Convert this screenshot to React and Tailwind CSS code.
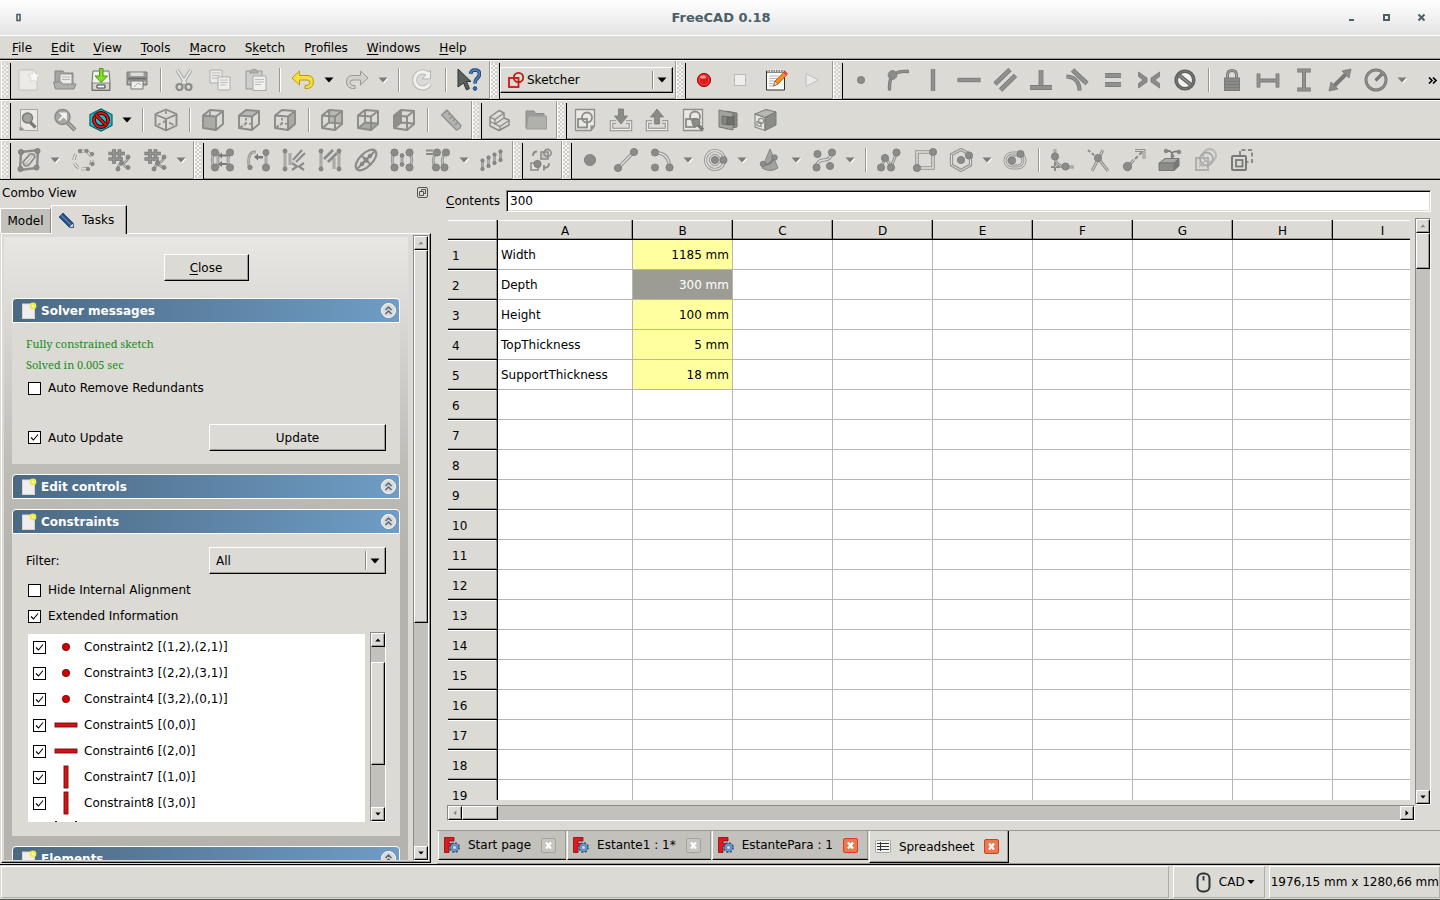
import React, { useState } from 'react';

const raised = 'border border-t-white border-l-white border-r-black border-b-black bg-[#dcdad5] shadow-[inset_-1px_-1px_0_#9b9990]';

const F = '#8b8b87';
const S = '#797975';
const BG = '#dcdad5';

/* ---------- drawing helpers ---------- */

const Node = ({ x, y, r = 3.6 }) => (
  <circle cx={x} cy={y} r={r} fill={F} stroke={S} strokeWidth="0.8" />
);

const Pipe = ({ d, w = 3.6 }) => (
  <>
    <path d={d} fill="none" stroke="#94948f" strokeWidth={w} />
    <path d={d} fill="none" stroke="#e2e1dd" strokeWidth={w - 2.2} />
  </>
);

const Bar = ({ d, w = 3.6 }) => (
  <>
    <path d={d} fill="none" stroke={S} strokeWidth={w} />
    <path d={d} fill="none" stroke="#91918d" strokeWidth={w - 1.6} />
  </>
);

const CubeEdges = () => (
  <path d="M2 7.500L15 8.500L15 22L2 20ZM2 7.500L9 2L22 3L15 8.500M22 3V16L15 22" fill="none" stroke={F} strokeWidth="1.9" strokeLinejoin="round" />
);

const CubeDashes = () => (
  <path d="M9 10V12.500M9 14V15.500L7 17M12 15.500L14 16M5.500 17.500L3.500 19.500" fill="none" stroke={F} strokeWidth="1.8" />
);

const CubeInside = () => (
  <path d="M9 3V14.500L3 19.500M9 14.500L21 15.500" fill="none" stroke={F} strokeWidth="1.8" />
);

const Hash = () => (
  <Bar d="M7 1V16M12.500 1V13M1.500 5.500H18M1.500 11H16" w={3.6} />
);

const icons = {
  new: (
    <>
      <path d="M2 2H17L20 8V22H2Z" fill="#ecebe8" stroke="#c2c1bc" />
      <path d="M17 2L18.800 6L23 6.600L20 9.600L20.800 14L17 12L13.200 14L14 9.600L11 6.600L15.200 6Z" fill="#f7f7f5" stroke="#cfcec9" strokeWidth="0.7" />
    </>
  ),
  open: (
    <>
      <path d="M2 20V3H10L11.500 5H20V20Z" fill="#a3a39f" stroke="#858581" />
      <path d="M7 6H19V17H7Z" fill="#ecebe8" stroke="#93938f" />
      <path d="M9 9H17M9 11.500H17" stroke="#b5b5b0" />
      <path d="M0.500 14H8L10 16H23L21 21H2.500Z" fill="#b0b0ab" stroke="#898985" />
    </>
  ),
  save: (
    <>
      <path d="M4 3H20L21 14V22.500H3V14Z" fill="#f1f1ee" stroke="#6e706c" />
      <path d="M3.500 15H20.500V22H3.500Z" fill="#d5d6d2" stroke="#6e706c" strokeWidth="0.8" />
      <path d="M8 17H16V20H8Z" fill="#fff" stroke="#3b3d3b" />
      <path d="M10.500 0.500H14V8H18.500L12.200 14.500L6 8H10.500Z" fill="#7fdc28" stroke="#4a9a06" />
    </>
  ),
  print: (
    <>
      <path d="M2 4H22V17H2Z" fill="#9b9b97" stroke="#7b7b77" />
      <path d="M5.500 4.500H18.500V8H5.500Z" fill="#dddcd8" />
      <path d="M3 10.500H21" stroke="#6d6d69" strokeWidth="2" />
      <path d="M3 14.500H21" stroke="#cfcfca" />
      <path d="M6 13H18V21H6Z" fill="#efefec" stroke="#777773" />
      <path d="M9 19L13 15L16 17" stroke="#a9a9a5" fill="none" />
    </>
  ),
  cut: (
    <>
      <path d="M5 2L14 16M19 2L10 16" stroke="#9b9b97" strokeWidth="3.400" />
      <path d="M5 2L14 16M19 2L10 16" stroke="#f0f0ed" strokeWidth="1.600" />
      <circle cx="7.500" cy="19" r="3" fill="none" stroke="#8b8b87" strokeWidth="2.200" />
      <circle cx="16.500" cy="19" r="3" fill="none" stroke="#8b8b87" strokeWidth="2.200" />
    </>
  ),
  copy: (
    <>
      <path d="M2 2H14V15H2Z" fill="#ecebe8" stroke="#aeaea9" />
      <path d="M4 5H12M4 7.500H12M4 10H10" stroke="#bdbdb8" />
      <path d="M10 9H22V22H10Z" fill="#efefec" stroke="#aeaea9" />
      <path d="M12 12H20M12 14.500H20M12 17H18" stroke="#bdbdb8" />
    </>
  ),
  paste: (
    <>
      <path d="M2 3H18V21H2Z" fill="#cfcfca" stroke="#999995" />
      <path d="M6 5V3L10 1L14 3V5Z" fill="#b2b2ad" stroke="#999995" />
      <path d="M9 8H22V22.500H9Z" fill="#efefec" stroke="#aaaaa5" />
      <path d="M11 11.500H20M11 14H20M11 16.500H17" stroke="#bdbdb8" />
    </>
  ),
  undo: (
    <path d="M1 10L8.500 3V7.500H17Q22.500 8 22.500 14Q22 20 16.500 20.500H14V17.500H16Q19 17 19 14.500Q19 12 16 12H8.500V17Z" fill="#f6e040" stroke="#b99a08" strokeLinejoin="round" />
  ),
  redo: (
    <path d="M23 10L15.500 3V7.500H7Q1.500 8 1.500 14Q2 20 7.500 20.500H10V17.500H8Q5 17 5 14.500Q5 12 8 12H15.500V17Z" fill="#d2d1cc" stroke="#999994" strokeLinejoin="round" />
  ),
  refresh: (
    <>
      <path d="M18 6A8 8 0 1 0 19.500 16" fill="none" stroke="#b5b5b0" strokeWidth="5" />
      <path d="M20.500 2V11H12Z" fill="#f0f0ed" stroke="#b5b5b0" />
      <path d="M18 6A8 8 0 1 0 19.500 16" fill="none" stroke="#f0f0ed" strokeWidth="3.200" />
    </>
  ),
  whatsThis: (
    <>
      <path d="M1 1L14 13.500H9.500L12.500 20.500L9.500 22L6.500 15L1 19Z" fill="#5b605c" stroke="#2e3436" />
      <path d="M13.500 6Q14 2 18 2Q22.500 2.200 22.500 6Q22.500 8.500 19.500 11Q18 12.500 18 15.500" fill="none" stroke="#1c4678" strokeWidth="3.600" />
      <path d="M13.500 6Q14 2 18 2Q22.500 2.200 22.500 6Q22.500 8.500 19.500 11Q18 12.500 18 15.500" fill="none" stroke="#4f86c2" strokeWidth="1.600" />
      <circle cx="18" cy="20.500" r="1.800" fill="#3d72ae" stroke="#1c4678" />
    </>
  ),
  record: (
    <>
      <circle cx="12" cy="12" r="6.600" fill="#e01b1b" stroke="#9d0a0a" />
      <circle cx="12" cy="12" r="5" fill="none" stroke="#f04848" />
      <ellipse cx="11" cy="9" rx="3" ry="1.600" fill="#f99" />
    </>
  ),
  stop: <rect x="6.500" y="6.500" width="11" height="11" fill="#eeeeeb" stroke="#bab9b4" />,
  macro: (
    <>
      <path d="M2.500 3H20.500V22H2.500Z" fill="#fbfbfb" stroke="#2f2f2f" />
      <path d="M3 2H20V5H3Z" fill="#888a85" />
      <path d="M4 1V4M6.500 1V4M9 1V4M11.500 1V4M14 1V4M16.500 1V4M19 1V4" stroke="#eee" strokeWidth="0.900" />
      <path d="M5 8H15M5 10.500H14M5 13H11M5 15.500H9M5 18H9" stroke="#a5a5a5" strokeWidth="0.800" />
      <path d="M9.500 18L11 13L19.500 4.500L22.500 7.500L14 16Z" fill="#f58a1f" stroke="#a8520a" strokeWidth="0.700" />
      <path d="M19.500 4.500L21 3L24 5.500L22.500 7.500Z" fill="#e24a4a" />
      <path d="M9.500 18L11 13L14 16Z" fill="#f2d5a8" stroke="#60462a" strokeWidth="0.500" />
    </>
  ),
  play: <path d="M6 5.500L18.500 12L6 18.500Z" fill="#ebeae7" stroke="#bebdb8" />,
  point: <Node x={12} y={12} r={3.6} />,
  pointOnObject: (
    <>
      <path d="M4.500 21Q4 10 9 6.500Q14 2.800 22.500 3.500" fill="none" stroke={S} strokeWidth="3.400" strokeLinecap="round" />
      <path d="M4.500 21Q4 10 9 6.500Q14 2.800 22.500 3.500" fill="none" stroke="#91918d" strokeWidth="1.600" strokeLinecap="round" />
      <Node x={7.500} y={7} r={4.400} />
    </>
  ),
  vertical: <Bar d="M12 1V23" w={4.400} />,
  horizontal: <Bar d="M0.500 12H23.500" w={4.400} />,
  parallel: <Bar d="M2 16L17 1.500M7.500 22L22.500 7.500" w={4.600} />,
  perpendicular: (
    <>
      <Bar d="M12 2V18" w={4.800} />
      <Bar d="M1 19.500H23" w={5} />
    </>
  ),
  tangent: (
    <>
      <Bar d="M7.500 2L22 15.500" w={4.600} />
      <Bar d="M1.500 8.500Q9 9 12 13.500Q14.500 17 14.500 22.500" w={4} />
    </>
  ),
  equal: <Bar d="M4 7.500H20M4 16.500H20" w={5.200} />,
  symmetric: <path d="M1.500 4L10 10V14L1.500 20V15.500L6 12L1.500 8.500ZM22.500 4L14 10V14L22.500 20V15.500L18 12L22.500 8.500Z" fill={F} stroke={S} strokeWidth="0.800" />,
  block: (
    <>
      <circle cx="12" cy="12" r="8.800" fill="#f2f2ef" stroke="#5f5f5c" strokeWidth="3.600" />
      <circle cx="12" cy="12" r="8.800" fill="none" stroke="#7c7c78" strokeWidth="1" />
      <path d="M6.500 7.500L17.500 16.500" stroke="#5f5f5c" strokeWidth="4" />
      <path d="M6.500 7.500L17.500 16.500" stroke="#9a9a96" strokeWidth="1.400" />
    </>
  ),
  lock: (
    <>
      <path d="M7.500 10V7Q7.500 2.500 12 2.500Q16.500 2.500 16.500 7V10" fill="none" stroke={S} strokeWidth="3" />
      <path d="M7.500 10V7Q7.500 2.500 12 2.500Q16.500 2.500 16.500 7V10" fill="none" stroke="#a5a5a1" />
      <rect x="4.500" y="10" width="15" height="12.500" fill={F} stroke={S} />
      <path d="M5 13.500H19M5 16.500H19M5 19.500H19" stroke={S} strokeWidth="0.900" />
    </>
  ),
  distX: <Bar d="M2.500 5.500V19.500M21.500 5.500V19.500M3 12.500H21" w={3.800} />,
  distY: <Bar d="M5 2.500H19M5 21.500H19M12 3V21" w={4} />,
  distance: (
    <>
      <path d="M5 19L19 5" stroke={S} strokeWidth="4" />
      <path d="M23 1L21 10L14 3ZM1 23L3 14L10 21Z" fill={F} stroke={S} strokeWidth="0.800" />
    </>
  ),
  radius: (
    <>
      <circle cx="12" cy="12" r="10" fill="none" stroke={S} strokeWidth="3" />
      <circle cx="12" cy="12" r="10" fill="none" stroke="#9a9a96" strokeWidth="0.900" />
      <path d="M11.500 12.500L18 6" stroke={S} strokeWidth="3.200" />
    </>
  ),
  fitAll: (
    <>
      <path d="M3.500 1.500H20.500V22.500H8L3.500 18Z" fill="#eae9e5" stroke="#a5a5a1" />
      <path d="M2.500 18.500L7.500 22.500H2.500Z" fill={F} />
      <path d="M13 14L18.500 19.500" stroke={S} strokeWidth="3.200" />
      <circle cx="10.500" cy="10" r="5" fill="#a2a29e" stroke={S} strokeWidth="1.400" />
    </>
  ),
  fitSelection: (
    <>
      <path d="M14 14L22 22" stroke={S} strokeWidth="4" />
      <path d="M14 14L22 22" stroke="#b0b0ab" strokeWidth="2" />
      <circle cx="9.500" cy="9" r="7.500" fill="#a8a8a3" stroke={F} strokeWidth="1.600" />
      <path d="M6 12.500L11.500 7M8 5.500H13V10.500Z" fill="#f2f2ef" stroke="#f2f2ef" strokeWidth="1.800" />
    </>
  ),
  drawStyle: (
    <>
      <path d="M12 1L23 6.500V17.500L12 23L1 17.500V6.500Z" fill="#12c2cc" stroke="#0a5c63" strokeWidth="1.200" />
      <circle cx="12" cy="12" r="7" fill="none" stroke="#280000" strokeWidth="3.800" />
      <circle cx="12" cy="12" r="7" fill="none" stroke="#e01414" strokeWidth="2.200" />
      <path d="M7 7L17 17" stroke="#280000" strokeWidth="3.800" />
      <path d="M7 7L17 17" stroke="#e01414" strokeWidth="2.200" />
    </>
  ),
  iso: (
    <>
      <path d="M12 1.500L22.500 6V17.500L12 22.500L1.500 17.500V6ZM1.500 6.500L12 11L22.500 6.500M12 11V22" fill="none" stroke={F} strokeWidth="1.900" strokeLinejoin="round" />
      <path d="M12 3V6M12 12.500L9 14.500M6.500 15.500L4 17M15 14.500L19.500 17" fill="none" stroke={F} strokeWidth="1.600" />
    </>
  ),
  front: (
    <>
      <path d="M2 7.500L15 8.500V22L2 20Z" fill="#ababa6" />
      <path d="M9 3.500V7" stroke={F} strokeWidth="1.600" />
      <CubeEdges />
    </>
  ),
  top: (
    <>
      <path d="M2 7.500L9 2L22 3L15 8.500Z" fill="#b9b9b4" />
      <CubeEdges />
      <CubeDashes />
    </>
  ),
  right: (
    <>
      <path d="M15 8.500L22 3V16L15 22Z" fill="#ababa6" />
      <CubeEdges />
      <CubeDashes />
    </>
  ),
  rear: (
    <>
      <path d="M9 3L21 4V15.500L9 14.500Z" fill="#b9b9b4" />
      <CubeInside />
      <CubeEdges />
    </>
  ),
  bottom: (
    <>
      <path d="M3 19.500L9 14.500L21 15.500L15 21.500Z" fill="#ababa6" />
      <CubeInside />
      <CubeEdges />
    </>
  ),
  left: (
    <>
      <path d="M2 7.500L9 3V14.500L2 20Z" fill="#8f8f8b" />
      <CubeInside />
      <CubeEdges />
    </>
  ),
  ruler: (
    <>
      <path d="M2.500 7L8 2L22 17.500Q21.500 21 17.500 22Z" fill="#b5b5b0" stroke={F} strokeWidth="1.200" />
      <path d="M8 2L5.500 5M11 5L9 7M13.500 8L10.500 11M16 11L14 13M19 14L16 17" stroke={F} strokeWidth="1.200" />
    </>
  ),
  part: (
    <>
      <path d="M2 9L11 2.500L16 5V10L21 12V17L11 22.500L2 18Z" fill="#dddcd8" stroke={F} strokeWidth="1.500" strokeLinejoin="round" />
      <path d="M2 9L7 11.500L16 5M7 11.500V16L16 10M7 16L12 18.500L21 12.500M12 18.500V22M2 13.500L7 16" fill="none" stroke={F} strokeWidth="1.300" />
    </>
  ),
  folder: (
    <>
      <path d="M2 20V3H10L11.500 5.500H20V20Z" fill="#9c9c98" stroke="#8c8c88" />
      <path d="M4 8H22.500V21H2.500Z" fill="#b1b1ac" stroke="#9b9b97" />
    </>
  ),
  sketchNew: (
    <>
      <path d="M2.500 1.500H21.500V18L18 22.500H2.500Z" fill="#e9e8e4" stroke="#8f8f8b" strokeWidth="1.300" />
      <path d="M21.500 17.500H17.500V22.500Z" fill={F} />
      <rect x="5" y="11" width="9" height="8.500" fill="none" stroke={F} strokeWidth="1.800" />
      <circle cx="14" cy="9.500" r="5" fill="none" stroke={F} strokeWidth="1.800" />
    </>
  ),
  sketchEdit: (
    <>
      <path d="M7 14H2.500V21.500H21.500V14H17" fill="none" stroke={F} strokeWidth="3.400" />
      <path d="M7 14H2.500V21.500H21.500V14H17" fill="none" stroke="#efeeeb" strokeWidth="1.400" />
      <path d="M9.500 1H14.500V8H18.500L12 16L5.500 8H9.500Z" fill={F} stroke={S} strokeWidth="0.800" />
    </>
  ),
  sketchLeave: (
    <>
      <path d="M7 14H2.500V21.500H21.500V14H17" fill="none" stroke={F} strokeWidth="3.400" />
      <path d="M7 14H2.500V21.500H21.500V14H17" fill="none" stroke="#efeeeb" strokeWidth="1.400" />
      <path d="M9.500 16H14.500V9H18.500L12 1L5.500 9H9.500Z" fill={F} stroke={S} strokeWidth="0.800" />
    </>
  ),
  sketchView: (
    <>
      <path d="M2.500 1.500H21.500V22.500H2.500Z" fill="#e9e8e4" stroke="#8f8f8b" strokeWidth="1.300" />
      <rect x="5" y="11" width="9" height="8" fill="none" stroke={F} strokeWidth="1.800" />
      <circle cx="14" cy="8.500" r="5" fill="none" stroke={F} strokeWidth="1.800" />
      <path d="M17 17L22 22" stroke={S} strokeWidth="3.200" />
      <circle cx="15" cy="14.500" r="4" fill={F} stroke={S} />
    </>
  ),
  sketchSection: (
    <>
      <path d="M9 3L20 5V19L9 21Z" fill="#858581" stroke={S} />
      <path d="M2 2L16 5V22L2 19Z" fill="#a2a29e" stroke={S} />
      <path d="M5 8L13 9V17L5 16Z" fill="#858581" stroke="#6b6b68" />
      <path d="M10 10L17 8V17L10 16Z" fill="#6f6f6c" stroke="#5f5f5c" strokeWidth="0.800" />
    </>
  ),
  mapSketch: (
    <>
      <path d="M2 6L12 9.500V22.500L2 19Z" fill="#e6e5e1" stroke={F} strokeWidth="1.200" />
      <path d="M2 6L13 1.500L23 4L12 9.500Z" fill="#b8b8b3" stroke={S} />
      <path d="M12 9.500L23 4V17L12 22.500Z" fill={F} stroke={S} />
      <path d="M4 13.500L8 14.500V18.500L4 17.500Z" fill="none" stroke={F} strokeWidth="1.200" />
      <circle cx="8" cy="13" r="2.600" fill="none" stroke={F} strokeWidth="1.200" />
    </>
  ),
  validate: (
    <>
      <path d="M4 4L21 2L20 20L3 22Z" fill="none" stroke={F} strokeWidth="2.400" />
      <path d="M6 14L13 6Q18 5 18 9L12 17Q7 20 6 14Z" fill="#c5c4bf" stroke={F} strokeWidth="1.600" />
      <path d="M8 14L14 8M11 15L16 9" stroke="#efefec" />
      <Node x={4} y={4} r={2.600} />
      <Node x={20.500} y={3} r={2.600} />
      <Node x={3.500} y={21} r={2.600} />
      <Node x={19.500} y={19.500} r={2.600} />
    </>
  ),
  closeShape: (
    <>
      <circle cx="12" cy="12" r="9" fill="none" stroke="#94948f" strokeWidth="3.200" strokeDasharray="6 3.400" />
      <circle cx="12" cy="12" r="9" fill="none" stroke="#eceae6" strokeWidth="1.400" strokeDasharray="6 3.400" />
      <Node x={9} y={3} r={1.700} />
      <Node x={15.500} y={3} r={1.700} />
      <Node x={21} y={6} r={1.700} />
      <Node x={21.500} y={16} r={1.700} />
      <Node x={17} y={21} r={1.700} />
    </>
  ),
  connect: (
    <>
      <Hash />
      <Pipe d="M21 9Q20 14 16 15Q11 16 11 21M16 15Q17 19 21 19.500" w={2.800} />
      <Node x={21} y={9} r={2} />
      <Node x={14.500} y={15} r={2} />
      <Node x={11} y={21} r={2} />
      <Node x={21} y={19.500} r={2} />
    </>
  ),
  selectConstraints: (
    <>
      <Hash />
      <Pipe d="M21 9Q20 14 14.500 15M14.500 15L11 21M14.500 15Q17 19 21 19.500" w={2.800} />
      <Node x={21} y={9} r={2} />
      <Node x={14.500} y={15} r={2} />
      <Node x={11} y={21} r={2} />
      <Node x={21} y={19.500} r={2} />
    </>
  ),
  selElements: (
    <>
      <Pipe d="M4 4Q0.500 12 4 20M20 4Q16 12 20 20M8 4V20" w={2.800} />
      <path d="M8 7.500L12 4.500V6.500H17V8.500H12V10.500ZM8 16L12 13V15H17V17H12V19Z" fill={S} />
      <Node x={5} y={4.500} />
      <Node x={5} y={19.500} />
      <Node x={20} y={4.500} />
      <Node x={20} y={19.500} />
    </>
  ),
  selRedundant: (
    <>
      <Pipe d="M10 4Q1 3 3 18M20 5V19" w={2.800} />
      <path d="M8 9L12 5.500V8H17V10.500H12V12.500Z" fill={S} />
      <Node x={4} y={19.500} r={2.200} />
      <Node x={20} y={4.500} r={3} />
      <Node x={20} y={19.500} />
    </>
  ),
  selConflict: (
    <>
      <Pipe d="M3 3V21M8 5V17" w={2.800} />
      <path d="M11 12L20 2M14 14L23 5" stroke={F} strokeWidth="2" />
      <path d="M10 15L15 18.500L10 22M22 15L17 18.500L22 22" fill="none" stroke={F} strokeWidth="2.200" />
      <Node x={3} y={3} r={2} />
      <Node x={3} y={21} r={2} />
    </>
  ),
  selInternal: (
    <>
      <Pipe d="M3 3V21M21 3V21M16 10V21" w={2.800} />
      <path d="M6 11L15 2M10 14L19 5" stroke={F} strokeWidth="2.800" />
      <Node x={3} y={3} r={2} />
      <Node x={3} y={21} r={2} />
      <Node x={21} y={3} r={2} />
      <Node x={21} y={21} r={2} />
    </>
  ),
  ellipseIn: (
    <>
      <ellipse cx="12" cy="12" rx="13" ry="6.500" transform="rotate(-45 12 12)" fill="none" stroke={F} strokeWidth="2.200" />
      <path d="M3.500 20.500L20.500 3.500M8 8L16 16" stroke={F} strokeWidth="2" />
      <Node x={12} y={12} r={2.200} />
      <Node x={8} y={16} r={1.800} />
      <Node x={16} y={8} r={1.800} />
    </>
  ),
  symmetry: (
    <>
      <Pipe d="M4.500 4Q0 12 4.500 20M19.500 4Q24 12 19.500 20M12 8V16" w={2.800} />
      <Node x={4.500} y={4.500} />
      <Node x={4.500} y={19.500} />
      <Node x={19.500} y={4.500} />
      <Node x={19.500} y={19.500} />
      <Node x={12} y={7.500} r={1.900} />
      <Node x={12} y={16.500} r={1.900} />
    </>
  ),
  clone: (
    <>
      <path d="M0 2.500H7M0 6H7" stroke={F} strokeWidth="2" />
      <Pipe d="M10 5Q5 12 9 19M19 5Q14 12 18 19" w={2.800} />
      <Node x={11} y={4.500} />
      <Node x={20} y={4.500} />
      <Node x={10} y={19.500} />
      <Node x={18.500} y={19.500} />
    </>
  ),
  array: (
    <>
      <Pipe d="M2.500 13V21M8.500 10V18M14.500 7V15M20.500 4V12" w={2.600} />
      {[2.5, 8.5, 14.5, 20.5].map((x, i) => (
        <g key={x}>
          <Node x={x} y={12.5 - i * 3} r={1.700} />
          <Node x={x} y={21 - i * 3} r={1.700} />
        </g>
      ))}
    </>
  ),
  virtualSpace: (
    <>
      <rect x="12" y="4" width="7" height="7" fill="#c9c8c3" stroke={F} strokeWidth="1.500" />
      <circle cx="18.500" cy="5" r="3.600" fill="none" stroke={F} strokeWidth="1.600" />
      <rect x="2" y="15" width="7" height="7" fill="#e6e5e1" stroke={F} strokeWidth="1.500" />
      <circle cx="8.500" cy="16" r="3.600" fill={F} stroke={S} />
      <path d="M4 8Q4 3.500 8 3.500M20 15Q20 20 15 20M15 17V22.500" fill="none" stroke={F} strokeWidth="1.800" />
    </>
  ),
  dot: <Node x={12} y={12} r={5.600} />,
  line: (
    <>
      <Pipe d="M4 20L20 4" />
      <Node x={4} y={20} />
      <Node x={20} y={4} />
    </>
  ),
  arc: (
    <>
      <Pipe d="M5 4.500Q19 5 19.500 19" />
      <Node x={5} y={4.500} />
      <Node x={5} y={19.500} />
      <Node x={19.500} y={19.500} />
    </>
  ),
  circle: (
    <>
      <circle cx="11" cy="12" r="9.500" fill="none" stroke="#94948f" strokeWidth="3.200" />
      <circle cx="11" cy="12" r="9.500" fill="none" stroke="#e2e1dd" strokeWidth="1.400" />
      <circle cx="11" cy="12" r="5.500" fill="none" stroke="#94948f" />
      <Node x={11} y={12} />
      <Node x={19.500} y={12} />
    </>
  ),
  conic: (
    <>
      <path d="M12 1L20 20Q12 25 4 20Z" fill="#a2a29e" stroke={S} strokeWidth="0.800" />
      <path d="M5 16Q12 19 16 9" fill="none" stroke={S} strokeWidth="1.800" />
      <Node x={5} y={16} r={2.800} />
      <Node x={16.500} y={9.500} r={2.800} />
    </>
  ),
  spline: (
    <>
      <Pipe d="M4 20Q5 12 12 12Q19 12 20 4" />
      <Node x={5.500} y={6} />
      <Node x={20} y={4.500} />
      <Node x={4.500} y={19.500} />
      <Node x={18} y={18} />
    </>
  ),
  polyline: (
    <>
      <Pipe d="M4 20L8.500 9L14 19L20 4" w={3} />
      <Node x={4} y={19.500} />
      <Node x={8} y={10} />
      <Node x={14} y={19.500} />
      <Node x={19.500} y={4.500} />
    </>
  ),
  rectangle: (
    <>
      <Pipe d="M4 4H20V20H4Z" />
      <Node x={20} y={4} />
      <Node x={4} y={20} />
    </>
  ),
  polygon: (
    <>
      <Pipe d="M12 1.500L21.500 6.500V17L12 22.500L2.500 17V6.500Z" w={3.200} />
      <Node x={12} y={12} />
      <Node x={20} y={7.500} />
    </>
  ),
  slot: (
    <>
      <rect x="2" y="5" width="20" height="15" rx="7.500" fill="none" stroke="#94948f" strokeWidth="3" />
      <rect x="2" y="5" width="20" height="15" rx="7.500" fill="none" stroke="#e2e1dd" strokeWidth="1.200" />
      <rect x="5" y="8" width="14" height="9" rx="4.500" fill="none" stroke={F} strokeWidth="1" />
      <Node x={9} y={12.500} />
      <Node x={17.500} y={6} />
    </>
  ),
  fillet: (
    <>
      <Pipe d="M5 1V9Q6 19 16 19H24" w={2.800} />
      <path d="M5 14V23M1 19H10" stroke={F} strokeWidth="2" strokeDasharray="4 1" />
      <Node x={5} y={8.500} />
      <Node x={15.500} y={18.500} />
    </>
  ),
  trim: (
    <>
      <Pipe d="M17 2L6 23M12 10L22 23" w={3} />
      <path d="M2 2L9 8" stroke={F} strokeWidth="2" strokeDasharray="3 2" />
      <Node x={12} y={10} />
    </>
  ),
  extend: (
    <>
      <Pipe d="M5 19L12 12" w={3} />
      <Pipe d="M13 2.500H22V11" w={3} />
      <path d="M13 11L21 3" stroke={F} strokeWidth="2" strokeDasharray="4 2" />
      <Node x={5.500} y={18.500} r={4.200} />
    </>
  ),
  external: (
    <>
      <path d="M1 15L7 10.500H21L16 15Z" fill="#a9a9a4" stroke={S} />
      <path d="M1 15H16V22.500H1Z" fill={F} stroke={S} />
      <path d="M16 15L21 10.500V18L16 22.500Z" fill="#777773" stroke={S} />
      <path d="M8 3Q14 2 14 7V11M14 5Q16 3 20 3.500" fill="none" stroke={S} strokeWidth="1.600" />
      <Node x={8} y={3} r={1.800} />
      <Node x={21} y={4} r={1.800} />
      <Node x={14.500} y={8} r={1.500} />
    </>
  ),
  carbonCopy: (
    <>
      <rect x="2" y="10" width="12" height="12" fill="none" stroke="#b0b0ab" strokeWidth="2" />
      <circle cx="15.500" cy="7.500" r="6.500" fill="none" stroke="#b5b5b0" strokeWidth="1.800" />
      <circle cx="12.500" cy="11" r="6.500" fill="none" stroke="#a9a9a5" strokeWidth="1.800" />
      <path d="M5 19L11 13M5 15L9 19" stroke="#b5b5b0" strokeWidth="1.200" />
    </>
  ),
  construction: (
    <>
      <rect x="2" y="8" width="14" height="14" rx="1" fill="none" stroke={S} strokeWidth="2" />
      <rect x="6" y="12" width="6.500" height="6.500" fill="none" stroke={S} strokeWidth="1.800" />
      <path d="M10 7V2H22V14H17" fill="none" stroke={F} strokeWidth="2" strokeDasharray="4 2.500" />
    </>
  ),
};

const Icon = ({ name }) => (
  <svg width="24" height="24" viewBox="0 0 24 24" className="shrink-0" aria-hidden="true">
    {icons[name]}
  </svg>
);

const Arrow = ({ dir = 'down', size = 10, color = '#000' }) => {
  const paths = {
    down: 'M0.500 2.500H9.500L5 7.500Z',
    up: 'M0.500 7.500H9.500L5 2.500Z',
    left: 'M7.500 0.500V9.500L2.500 5Z',
    right: 'M2.500 0.500V9.500L7.500 5Z',
  };
  return (
    <svg width={size} height={size} viewBox="0 0 10 10" className="shrink-0" aria-hidden="true">
      {color !== '#000' && <path d={paths[dir]} transform="translate(1 1)" fill="#fff" />}
      <path d={paths[dir]} fill={color} />
    </svg>
  );
};

/* ---------- menu and toolbars ---------- */

const menus = [
  ['', 'F', 'ile'],
  ['', 'E', 'dit'],
  ['', 'V', 'iew'],
  ['', 'T', 'ools'],
  ['', 'M', 'acro'],
  ['S', 'k', 'etch'],
  ['P', 'r', 'ofiles'],
  ['', 'W', 'indows'],
  ['', 'H', 'elp'],
];

// '|' is a separator, a trailing '+' adds a drop-down arrow
const row1a = ['new', 'open', 'save', 'print', '|', 'cut', 'copy', 'paste', '|', 'undo+', 'redo+', '|', 'refresh', '|', 'whatsThis'];
const row1b = ['record', 'stop', 'macro', 'play'];
const row1c = ['point', 'pointOnObject', 'vertical', 'horizontal', 'parallel', 'perpendicular', 'tangent', 'equal', 'symmetric', 'block', '|', 'lock', 'distX', 'distY', 'distance', 'radius+'];
const row2 = [
  ['fitAll', 'fitSelection', 'drawStyle+', '|', 'iso', '|', 'front', 'top', 'right', '|', 'rear', 'bottom', 'left', '|', 'ruler'],
  ['part', 'folder'],
  ['sketchNew', 'sketchEdit', 'sketchLeave', 'sketchView', 'sketchSection', 'mapSketch'],
];
const row3 = [
  ['validate+', 'closeShape', 'connect', 'selectConstraints+'],
  ['selElements', 'selRedundant', 'selConflict', 'selInternal', 'ellipseIn', 'symmetry', 'clone+', 'array'],
  ['virtualSpace'],
  ['dot', 'line', 'arc+', 'circle+', 'conic+', 'spline+', '|', 'polyline', 'rectangle', 'polygon+', 'slot', '|', 'fillet', 'trim', 'extend', 'external', 'carbonCopy', 'construction'],
];
const enabledMenus = ['undo', 'drawStyle'];

const ToolbarRow = ({ children }) => (
  <div className="flex h-10 shrink-0 overflow-hidden border-t border-b border-t-white border-b-black pl-px shadow-[inset_0_-1px_0_#9b9990]">
    {children}
  </div>
);

const Toolbar = ({ items = [], last, children }) => (
  <div className={`flex items-center border-l border-l-white ${last ? 'grow' : 'shrink-0 border-r border-r-[#9b9990] pr-0.5'}`}>
    <div className="mt-px h-9 w-[9px] shrink-0 border-r border-r-black bg-[repeating-conic-gradient(#f4f3f1_0_25%,#d2d0ca_0_50%)] bg-size-[4px_4px] shadow-[inset_-2px_-2px_0_#dcdad5]" />
    {items.map((item, i) => {
      if (item === '|') {
        return <div key={i} className="mx-[5px] h-6 w-px shrink-0 bg-[#9b9990] shadow-[1px_0_0_#fff]" />;
      }
      const name = item.replace('+', '');
      return (
        <React.Fragment key={i}>
          <button aria-label={name} className="flex h-9 w-9 shrink-0 items-center justify-center">
            <Icon name={name} />
          </button>
          {item.endsWith('+') && (
            <button aria-label={`${name} options`} className="flex h-9 w-[18px] shrink-0 items-center justify-center pr-0.5">
              <Arrow color={enabledMenus.includes(name) ? '#000' : '#7b7b77'} />
            </button>
          )}
        </React.Fragment>
      );
    })}
    {children}
  </div>
);

/* ---------- small controls ---------- */

const CheckBox = ({ label, defaultChecked, icon }) => (
  <label className="flex h-[26px] items-center">
    <span className="grid place-items-center">
      <input
        type="checkbox"
        defaultChecked={defaultChecked}
        className="peer col-start-1 row-start-1 size-[13px] appearance-none border border-black bg-white"
      />
      <svg width="9" height="9" viewBox="0 0 9 9" className="invisible col-start-1 row-start-1 peer-checked:visible" aria-hidden="true">
        <path d="M1 4.500L3.500 7L8 1.500" fill="none" stroke="#000" strokeWidth="1.100" />
      </svg>
    </span>
    {icon}
    <span className={icon ? '' : 'ml-[7px]'}>{label}</span>
  </label>
);

const ScrollButton = ({ dir, disabled }) => (
  <button aria-label={`Scroll ${dir}`} className={`flex size-[14px] shrink-0 items-center justify-center ${raised}`}>
    <Arrow dir={dir} size={6} color={disabled ? '#85857f' : '#000'} />
  </button>
);

const scrollFrame = 'border border-t-[#8b8982] border-l-[#8b8982] border-r-white border-b-white bg-[#c3c1bb]';

/* ---------- combo view ---------- */

const NoteIcon = () => (
  <svg width="16" height="18" viewBox="0 0 16 18" className="shrink-0" aria-hidden="true">
    <rect x="1.500" y="2" width="12" height="14.500" fill="#efeeec" stroke="#d5d5d0" />
    <circle cx="12" cy="4" r="3.400" fill="#f2e84a" />
    <circle cx="12" cy="4" r="1.300" fill="#fffbc0" />
  </svg>
);

const Group = ({ title, children }) => (
  <section>
    <div className="flex h-[25px] items-center rounded-t border border-white bg-linear-to-r from-[#4b6983] to-[#6f9dc6] pr-[3px] pl-2">
      <NoteIcon />
      <h2 className="ml-1 grow text-xs font-bold text-white">{title}</h2>
      <button aria-label={`Collapse ${title}`} className="size-[15px]">
        <svg width="15" height="15" viewBox="0 0 15 15" aria-hidden="true">
          <circle cx="7.500" cy="7.500" r="7" fill="#dcdad5" stroke="#fff" />
          <path d="M4.500 7L7.500 4L10.500 7M4.500 11L7.500 8L10.500 11" fill="none" stroke="#4b6983" strokeWidth="1.500" />
        </svg>
      </button>
    </div>
    {children && <div className="bg-[#dcdad5] px-3.5">{children}</div>}
  </section>
);

const constraints = [
  ['Constraint2 [(1,2),(2,1)]', 'point'],
  ['Constraint3 [(2,2),(3,1)]', 'point'],
  ['Constraint4 [(3,2),(0,1)]', 'point'],
  ['Constraint5 [(0,0)]', 'horizontal'],
  ['Constraint6 [(2,0)]', 'horizontal'],
  ['Constraint7 [(1,0)]', 'vertical'],
  ['Constraint8 [(3,0)]', 'vertical'],
];

const ConstraintIcon = ({ kind }) => (
  <svg width="24" height="24" viewBox="0 0 24 24" className="mr-1.5 ml-2 shrink-0" aria-hidden="true">
    {kind === 'point' && <circle cx="12" cy="12" r="3.700" fill="#d40000" stroke="#5a1414" strokeWidth="0.800" />}
    {kind === 'horizontal' && <rect x="1" y="10" width="22" height="4" fill="#d81010" stroke="#6a1010" strokeWidth="0.900" />}
    {kind === 'vertical' && <rect x="10" y="1" width="4" height="22" fill="#d81010" stroke="#6a1010" strokeWidth="0.900" />}
  </svg>
);

const ComboView = () => (
  <aside className="flex w-[437px] shrink-0 flex-col">
    <div className="flex h-[25px] shrink-0 items-center justify-between pr-[9px] pl-0.5">
      <span>Combo View</span>
      <button aria-label="Float">
        <svg width="11" height="11" viewBox="0 0 11 11" fill="none" stroke="#55554f" aria-hidden="true">
          <rect x="0.500" y="0.500" width="10" height="10" rx="1.500" />
          <path d="M4.500 4V2.500H8.500V6.500H7M2.500 4.500H6.500V8.500H2.500Z" />
        </svg>
      </button>
    </div>

    <div className="flex h-7 shrink-0 items-end" role="tablist">
      <button role="tab" className="h-[25px] w-[51px] border-t border-r border-l border-t-white border-r-[#8b8982] border-l-white bg-[#c3c1bb]">
        Model
      </button>
      <button role="tab" aria-selected="true" className="relative -mb-px flex h-[29px] w-[76px] items-center border-t border-r border-l border-t-white border-r-black border-l-white bg-[#dcdad5] pl-1.5 shadow-[inset_-1px_0_0_#9b9990]">
        <svg width="17" height="17" viewBox="0 0 17 17" className="mr-[7px] shrink-0" aria-hidden="true">
          <path d="M1 5L5 1L15 11L15.500 15.500L11 15Z" fill="#2a4f86" stroke="#16305a" strokeWidth="0.700" />
          <path d="M3 3L13 13" stroke="#5b86bd" strokeWidth="1.200" />
          <path d="M11 15L15 11L15.500 15.500Z" fill="#e9e9ee" stroke="#16305a" strokeWidth="0.600" />
        </svg>
        Tasks
      </button>
    </div>

    <div className="mr-1.5 mb-px ml-px flex min-h-0 grow border border-t-white border-l-white border-r-black border-b-black pt-px pr-px pb-px shadow-[inset_-1px_-1px_0_#9b9990]">
      <div className="mt-0.5 mb-px ml-0.5 grow overflow-hidden bg-[linear-gradient(#e8e7e3,#bdbcb7_230px,#b5b3ae_330px)] px-2">
        <div className="flex justify-center py-[17px]">
          <button className={`h-[27px] w-[85px] ${raised}`}>
            <u className="underline-offset-2">C</u>lose
          </button>
        </div>
        <div className="flex flex-col gap-2.5">
          <Group title="Solver messages">
            <div className="pt-2.5 font-['Noto_Serif','Droid_Serif','Liberation_Serif',serif] text-[11px] leading-[21px] text-[#188c18]">
              <p>Fully constrained sketch</p>
              <p>Solved in 0.005 sec</p>
            </div>
            <div className="pl-0.5">
              <CheckBox label="Auto Remove Redundants" />
            </div>
            <div className="mt-[23px] flex items-center justify-between pb-[13px] pl-0.5">
              <CheckBox label="Auto Update" defaultChecked />
              <button className={`h-[27px] w-[177px] ${raised}`}>Update</button>
            </div>
          </Group>
          <Group title="Edit controls" />
          <Group title="Constraints">
            <div className="flex items-center justify-between pt-[13px] pb-[3px]">
              <label htmlFor="filter">Filter:</label>
              <div className={`flex h-[27px] w-[177px] items-center ${raised}`}>
                <select id="filter" className="h-full min-w-0 grow appearance-none pl-1.5 outline-none">
                  <option>All</option>
                </select>
                <div className="mr-[5px] flex h-[19px] items-center border-l border-l-[#8b8982] pl-1 shadow-[inset_1px_0_0_#fff]">
                  <Arrow />
                </div>
              </div>
            </div>
            <div className="pl-0.5">
              <CheckBox label="Hide Internal Alignment" />
              <CheckBox label="Extended Information" defaultChecked />
            </div>
            <div className="flex justify-between pt-[3px] pb-3.5 pl-0.5">
              <ul className="mt-0.5 h-[188px] w-[337px] overflow-hidden bg-white pl-[5px]">
                {constraints.map(([label, kind]) => (
                  <li key={label}>
                    <CheckBox label={label} defaultChecked icon={<ConstraintIcon kind={kind} />} />
                  </li>
                ))}
                <li className="h-1.5 pl-[22px]">
                  <svg width="22" height="6" viewBox="0 0 22 6" aria-hidden="true">
                    <path d="M0 5.500H2M20 5.500H22" stroke="#401010" />
                  </svg>
                </li>
              </ul>
              <div className={`flex w-4 flex-col ${scrollFrame}`}>
                <ScrollButton dir="up" />
                <div className={`mt-[15px] h-[103px] ${raised}`} />
                <div className="grow" />
                <ScrollButton dir="down" />
              </div>
            </div>
          </Group>
          <Group title="Elements" />
        </div>
      </div>
      <div className={`ml-[5px] flex w-4 shrink-0 flex-col ${scrollFrame}`}>
        <ScrollButton dir="up" disabled />
        <div className={`h-[373px] shrink-0 ${raised}`} />
        <div className="grow" />
        <ScrollButton dir="down" />
      </div>
    </div>
  </aside>
);

/* ---------- spreadsheet ---------- */

const columns = ['A', 'B', 'C', 'D', 'E', 'F', 'G', 'H', 'I'];
const cells = [
  ['Width', '1185 mm'],
  ['Depth', '300 mm'],
  ['Height', '100 mm'],
  ['TopThickness', '5 mm'],
  ['SupportThickness', '18 mm'],
];
const headCell = 'border-r border-b border-black bg-[#dcdad5] pt-0.5 font-normal shadow-[inset_-1px_-1px_0_#9b9990,inset_0_1px_0_#fff]';

const SheetCell = ({ row, col }) => {
  const value = cells[row]?.[col];
  let look = '';
  if (col === 1 && value) {
    look = row === 1 ? 'bg-[#9c9b94] text-white text-right' : 'bg-[#ffffa0] text-right';
  }
  return <td className={`border-r border-b border-[#b7b6b2] px-[3px] ${look}`}>{value}</td>;
};

const Spreadsheet = () => {
  const [contents, setContents] = useState('300');
  return (
    <div className="flex min-h-0 grow flex-col pt-2.5 pr-[9px] pb-[9px] pl-2.5">
      <div className="-ml-px flex h-[22px] shrink-0 items-center gap-1.5">
        <label htmlFor="contents">
          <u className="underline-offset-2">C</u>ontents
        </label>
        <input
          id="contents"
          value={contents}
          onChange={(e) => setContents(e.target.value)}
          className="h-full min-w-0 grow border border-t-[#8b8982] border-r-white border-b-white border-l-[#8b8982] bg-white pl-[3px] shadow-[inset_1px_1px_0_#000,inset_-1px_-1px_0_#dcdad5] outline-none"
        />
      </div>
      <div className="mt-1.5 flex min-h-0 grow">
        <div className="flex min-w-0 grow flex-col">
          <div className="mt-0.5 mr-[5px] mb-[5px] ml-px min-h-0 grow overflow-hidden bg-white">
            <table className="w-[985px] table-fixed border-separate border-spacing-0">
              <colgroup>
                <col className="w-[50px]" />
                <col className="w-[135px]" />
                {columns.slice(1).map((c) => <col key={c} className="w-[100px]" />)}
              </colgroup>
              <thead>
                <tr className="h-5">
                  <th className={headCell} />
                  {columns.map((c) => <th key={c} className={headCell}>{c}</th>)}
                </tr>
              </thead>
              <tbody>
                {Array.from({ length: 19 }, (_, r) => (
                  <tr key={r} className="h-[30px]">
                    <th className={`pl-1 text-left ${headCell}`}>{r + 1}</th>
                    {columns.map((c, i) => <SheetCell key={c} row={r} col={i} />)}
                  </tr>
                ))}
              </tbody>
            </table>
          </div>
          <div className={`flex h-4 shrink-0 ${scrollFrame}`}>
            <ScrollButton dir="left" disabled />
            <div className={`w-9 ${raised}`} />
            <div className="grow" />
            <ScrollButton dir="right" />
          </div>
        </div>
        <div className={`mb-4 flex w-4 shrink-0 flex-col ${scrollFrame}`}>
          <ScrollButton dir="up" disabled />
          <div className={`h-9 ${raised}`} />
          <div className="grow" />
          <ScrollButton dir="down" />
        </div>
      </div>
    </div>
  );
};

/* ---------- document tabs and status bar ---------- */

const FreeCadIcon = () => (
  <svg width="16" height="16" viewBox="0 0 16 16" className="shrink-0" aria-hidden="true">
    <path d="M0.500 0.500H10V4H5V6.500H8V9.500H5V15.500H0.500Z" fill="#e0191e" stroke="#7c0c0f" strokeWidth="0.800" />
    <circle cx="10.500" cy="10.500" r="4.300" fill="none" stroke="#2c4f80" strokeWidth="2.200" strokeDasharray="1.900 1.480" />
    <circle cx="10.500" cy="10.500" r="2.900" fill="none" stroke="#3c6498" strokeWidth="2.800" />
    <circle cx="10.500" cy="10.500" r="2.900" fill="none" stroke="#6c9bd2" strokeWidth="1.600" />
    <circle cx="10.500" cy="10.500" r="1.400" fill="#dcdad5" />
  </svg>
);

const SheetIcon = () => (
  <svg width="16" height="16" viewBox="0 0 16 16" className="shrink-0" aria-hidden="true">
    <rect x="0.500" y="1.500" width="15" height="12" rx="1" fill="#f4f4f2" stroke="#a5a6a2" />
    <path d="M2 4.500H14M2 7.500H14M2 10.500H14M5.500 3V12" stroke="#2e3436" />
  </svg>
);

const docs = [
  { title: 'Start page' },
  { title: 'Estante1 : 1*' },
  { title: 'EstantePara : 1', red: true },
  { title: 'Spreadsheet', red: true, active: true },
];

const DocTab = ({ title, red, active }) => (
  <div
    className={`flex items-center border-l border-l-white pl-[5px] ${
      active
        ? 'h-8 border-r border-b border-r-black border-b-black pr-[9px] shadow-[inset_-1px_-1px_0_#9b9990]'
        : 'h-[29px] border-b border-b-black bg-[#c3c1bb] pr-2.5 shadow-[inset_-1px_-1px_0_#9b9990]'
    }`}
  >
    <button role="tab" aria-selected={!!active} className="flex items-center gap-2">
      {active ? <SheetIcon /> : <FreeCadIcon />}
      {title}
    </button>
    <button aria-label={`Close ${title}`} className="ml-2.5">
      <svg width="15" height="15" viewBox="0 0 15 15" className="block" aria-hidden="true">
        <rect x="0.500" y="0.500" width="14" height="14" rx="1.500" fill={red ? '#e67a50' : '#c6c5c0'} stroke={red ? '#dd3a22' : '#a3a29d'} />
        <path d="M5 4.500L10 10.500M10 4.500L5 10.500" stroke="#fff" strokeWidth="2.200" />
      </svg>
    </button>
  </div>
);

const statusCell = 'border border-t-white border-l-white border-r-[#b0aea8] border-b-[#b0aea8]';

export default function App() {
  return (
    <div className="flex h-screen flex-col overflow-hidden bg-[#dcdad5] font-['DejaVu_Sans',sans-serif] text-xs text-black">
      <header className="grid h-[35px] shrink-0 grid-cols-[1fr_auto_1fr] items-center bg-linear-to-b from-white to-[#e4e4e4] pr-3.5 pl-4">
        <svg width="6" height="9" viewBox="0 0 6 9" aria-hidden="true">
          <path d="M1 1.500H4V7.500H1Z" fill="none" stroke="#4a5f68" strokeWidth="1.600" />
        </svg>
        <h1 className="text-[13px] font-bold text-[#4a5f68]">FreeCAD 0.18</h1>
        <div className="flex justify-end gap-[26px]">
          <button aria-label="Minimize">
            <svg width="9" height="9" viewBox="0 0 9 9" aria-hidden="true"><path d="M2 7H7" stroke="#4a5f68" strokeWidth="2" /></svg>
          </button>
          <button aria-label="Maximize">
            <svg width="9" height="9" viewBox="0 0 9 9" aria-hidden="true"><path d="M2 2H7V7H2Z" fill="none" stroke="#4a5f68" strokeWidth="2" /></svg>
          </button>
          <button aria-label="Close window">
            <svg width="9" height="9" viewBox="0 0 9 9" aria-hidden="true"><path d="M1.500 1.500L7.500 7.500M7.500 1.500L1.500 7.500" stroke="#4a5f68" strokeWidth="2" /></svg>
          </button>
        </div>
      </header>

      <nav className="flex h-[25px] shrink-0 items-center gap-px border-t border-b border-t-white border-b-black pl-[3px] shadow-[inset_0_-1px_0_#9b9990]">
        {menus.map(([before, key, after]) => (
          <button key={before + key + after} className="px-[9px]">
            {before}<u className="underline-offset-2">{key}</u>{after}
          </button>
        ))}
      </nav>

      <ToolbarRow>
        <Toolbar items={row1a} />
        <Toolbar>
          <div className={`flex h-[26px] w-[173px] items-center pl-1.5 ${raised}`}>
            <svg width="18" height="18" viewBox="0 0 18 18" fill="none" stroke="#cc1414" strokeWidth="1.800" className="shrink-0" aria-hidden="true">
              <rect x="2" y="7" width="9.500" height="9" />
              <circle cx="11.500" cy="6.500" r="4.700" />
            </svg>
            <select aria-label="Workbench" className="h-full min-w-0 grow appearance-none pl-0.5 outline-none">
              <option>Sketcher</option>
            </select>
            <div className="mr-[5px] flex h-[18px] items-center border-l border-l-[#8b8982] pl-1 shadow-[inset_1px_0_0_#fff]">
              <Arrow />
            </div>
          </div>
        </Toolbar>
        <Toolbar items={row1b} />
        <Toolbar items={row1c} last>
          <button aria-label="More tools" className="ml-auto pr-[3px]">
            <svg width="9" height="7" viewBox="0 0 9 7" fill="none" stroke="#000" strokeWidth="1.600" aria-hidden="true">
              <path d="M1 0.500L4 3.500L1 6.500M5 0.500L8 3.500L5 6.500" />
            </svg>
          </button>
        </Toolbar>
      </ToolbarRow>
      <ToolbarRow>
        {row2.map((items, i) => <Toolbar key={i} items={items} last={i === row2.length - 1} />)}
      </ToolbarRow>
      <ToolbarRow>
        {row3.map((items, i) => <Toolbar key={i} items={items} last={i === row3.length - 1} />)}
      </ToolbarRow>

      <main className="flex min-h-0 grow">
        <ComboView />
        <div className="flex min-w-0 grow flex-col">
          <Spreadsheet />
          <div className="flex h-[34px] shrink-0 items-start gap-px border-t border-b border-t-[#9b9990] border-b-[#9b9990] pl-px" role="tablist">
            {docs.map((doc) => <DocTab key={doc.title} {...doc} />)}
          </div>
        </div>
      </main>

      <footer className="flex h-9 shrink-0 gap-1 border-t border-b border-t-black border-b-[#55554f] pt-px pb-px pl-px">
        <div className={`grow ${statusCell}`} />
        <div className={`flex w-[92px] items-center justify-end gap-1 pr-[9px] ${statusCell}`}>
          <svg width="15" height="21" viewBox="0 0 15 21" className="mr-1 shrink-0" fill="none" stroke="#2e3436" aria-hidden="true">
            <rect x="1.500" y="1.500" width="12" height="18" rx="5" strokeWidth="2" />
            <path d="M7.500 4V8.500" strokeWidth="1.800" />
          </svg>
          <button className="flex items-center gap-0.5">
            CAD
            <Arrow size={8} />
          </button>
        </div>
        <div className={`flex items-center pl-px whitespace-nowrap ${statusCell}`}>1976,15 mm x 1280,66 mm</div>
      </footer>
    </div>
  );
}
